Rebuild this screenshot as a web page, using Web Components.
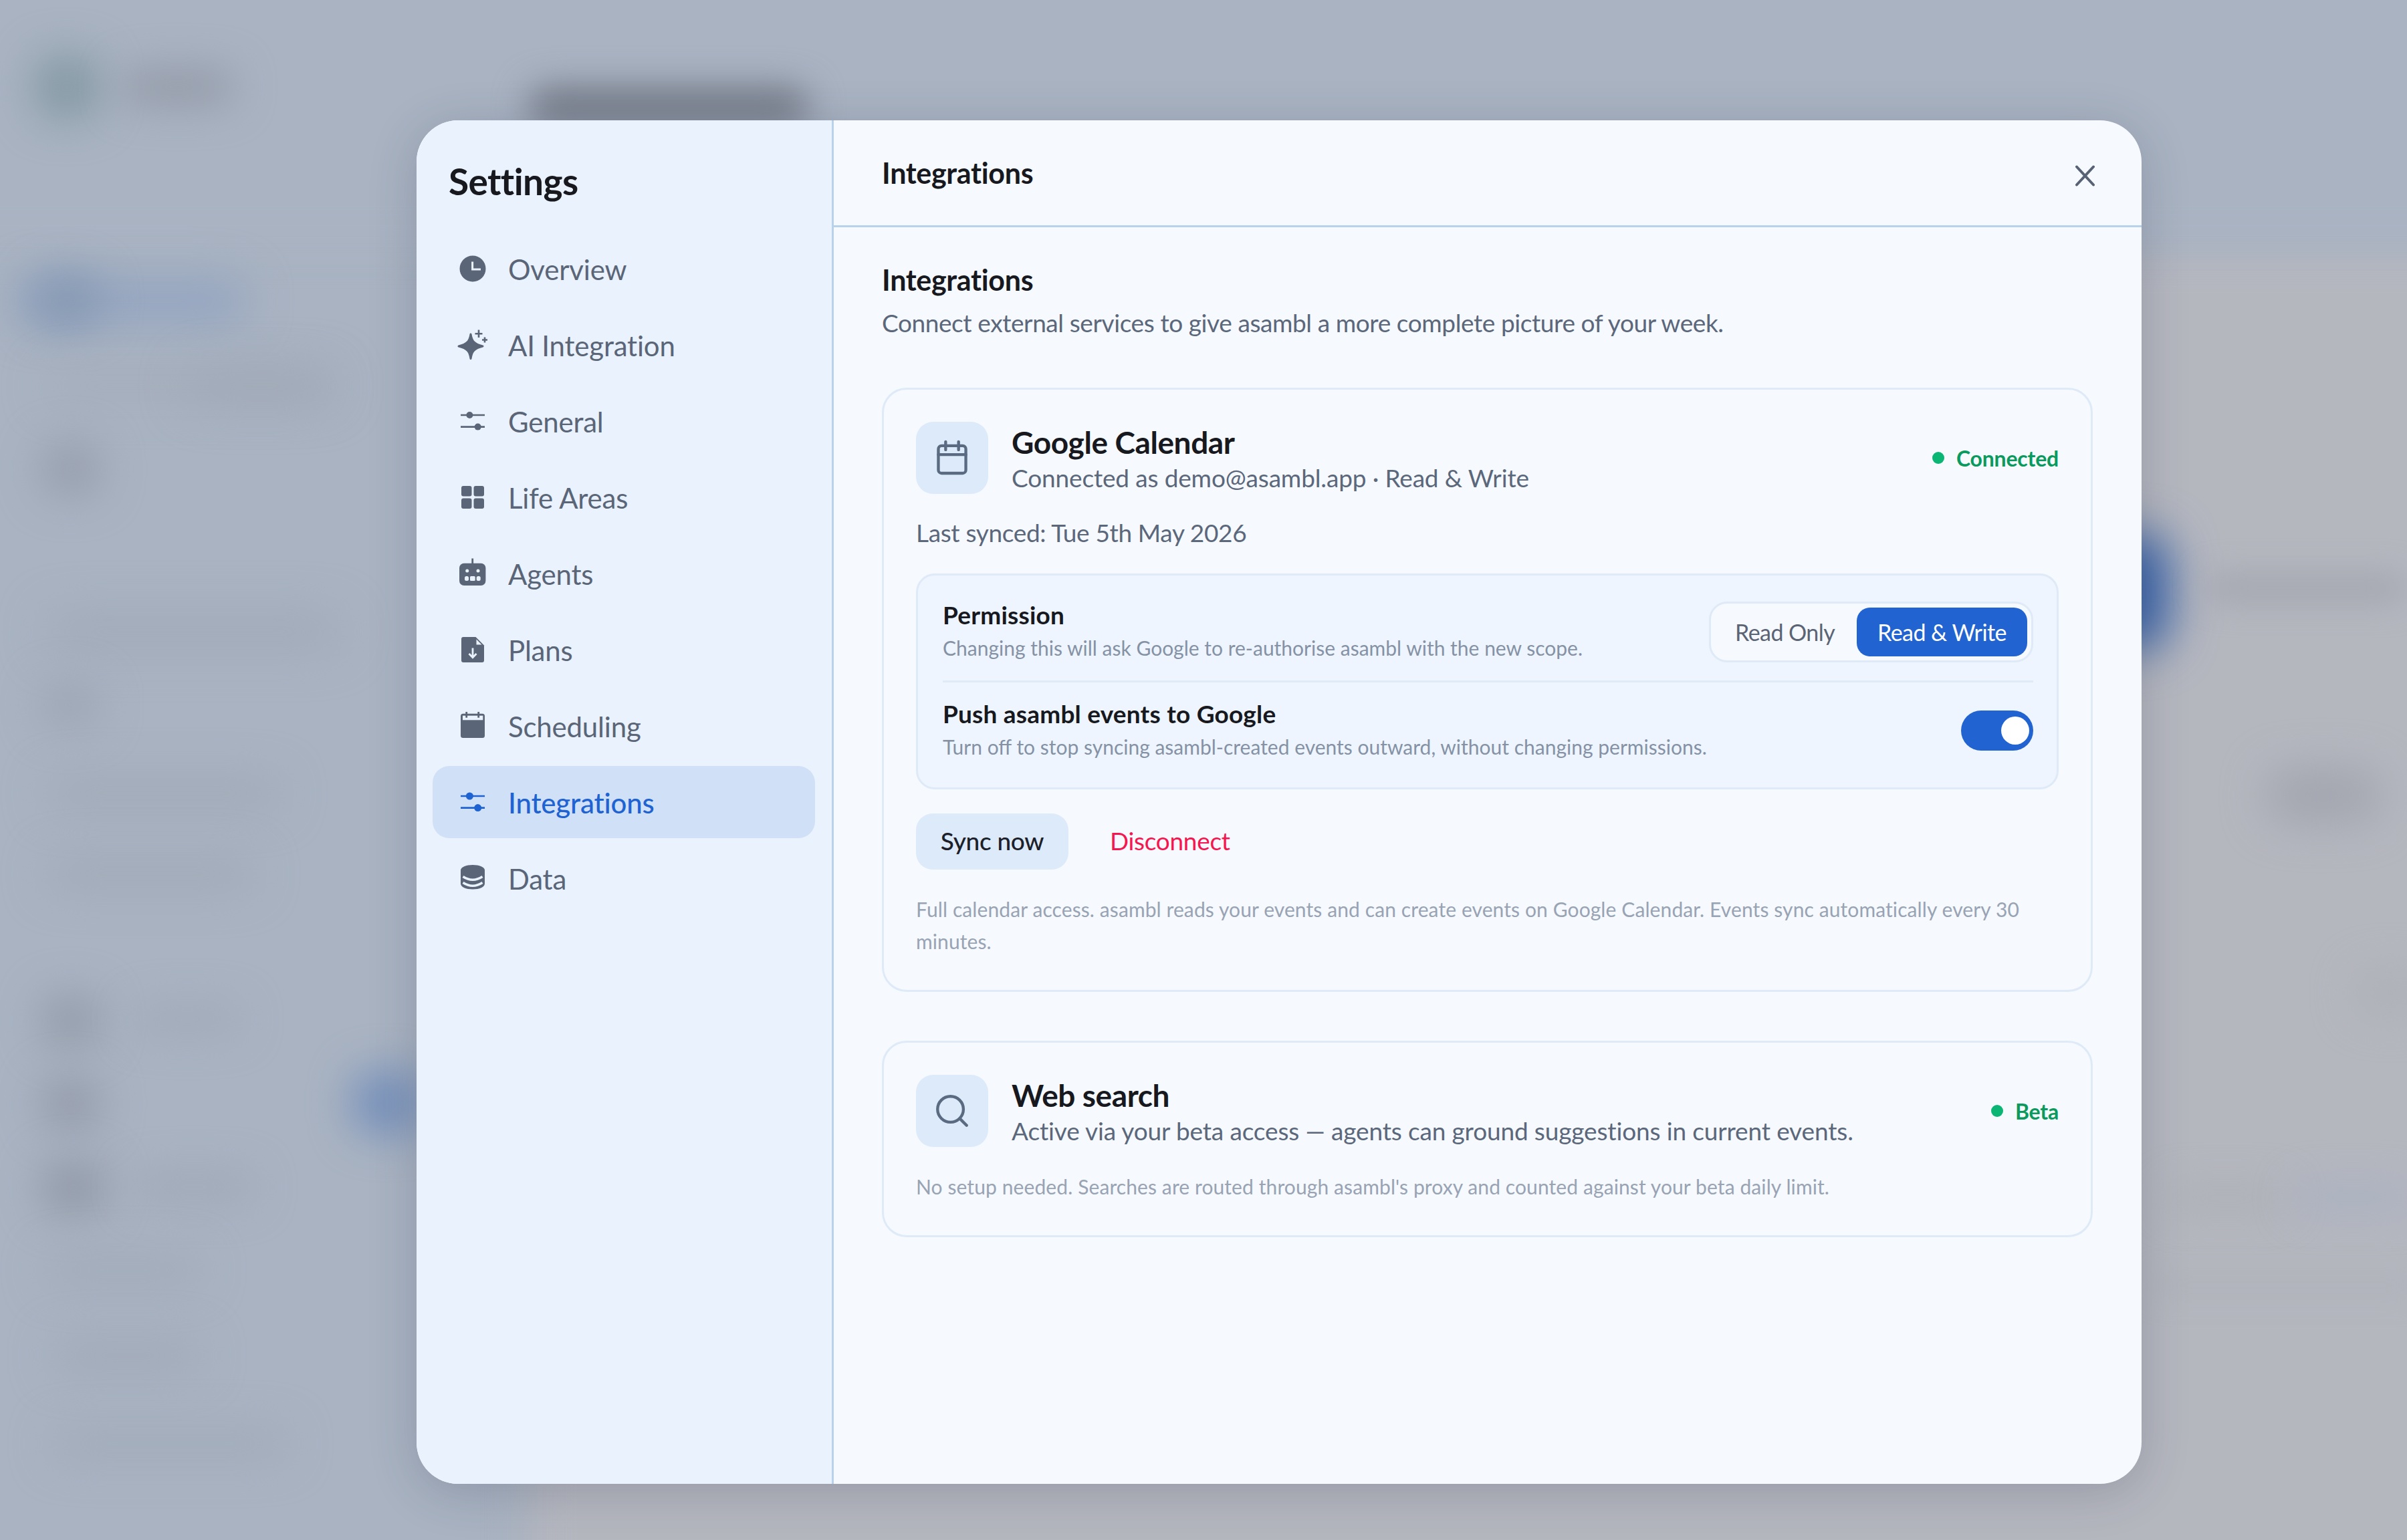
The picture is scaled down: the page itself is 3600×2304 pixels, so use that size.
<!doctype html>
<html>
<head>
<meta charset="utf-8">
<title>Settings</title>
<style>
html, body { margin: 0; padding: 0; }
body { width: 3600px; height: 2304px; overflow: hidden; background: #a9b3c2; font-family: "Lato", "Liberation Sans", sans-serif; }
integration-card button { font: inherit; font-size: 37px; letter-spacing: -.3px; border: 0; padding: 0 0 4px; background: none; font-family: "Lato", "Liberation Sans", sans-serif; }
integration-card .sync { box-sizing: border-box; width: 228px; height: 84px; border-radius: 25px; background: #dceafa; color: #1c2028; font-weight: 500; }
integration-card .disconnect { color: #f4174f; }
</style>
</head>
<body>
<blurred-page></blurred-page>
<modal-layer>
  <settings-modal>
    <settings-nav slot="nav">
      <nav-item label="Overview" icon="clock"></nav-item>
      <nav-item label="AI Integration" icon="spark"></nav-item>
      <nav-item label="General" icon="sliders"></nav-item>
      <nav-item label="Life Areas" icon="grid"></nav-item>
      <nav-item label="Agents" icon="robot"></nav-item>
      <nav-item label="Plans" icon="file"></nav-item>
      <nav-item label="Scheduling" icon="cal"></nav-item>
      <nav-item label="Integrations" icon="sliders" active></nav-item>
      <nav-item label="Data" icon="db"></nav-item>
    </settings-nav>

    <integration-card name="Google Calendar" sub="Connected as demo@asambl.app · Read &amp; Write" status="Connected" glyph="calendar">
      <p class="last">Last synced: Tue 5th May 2026</p>
      <div class="panel">
        <setting-row name="Permission" hint="Changing this will ask Google to re-authorise asambl with the new scope." first>
          <seg-control></seg-control>
        </setting-row>
        <setting-row name="Push asambl events to Google" hint="Turn off to stop syncing asambl-created events outward, without changing permissions.">
          <toggle-switch></toggle-switch>
        </setting-row>
      </div>
      <div class="actions">
        <button class="sync">Sync now</button>
        <button class="disconnect">Disconnect</button>
      </div>
      <p class="note">Full calendar access. asambl reads your events and can create events on Google Calendar. Events sync automatically every 30 minutes.</p>
    </integration-card>

    <integration-card name="Web search" sub="Active via your beta access — agents can ground suggestions in current events." status="Beta" glyph="search">
      <p class="note">No setup needed. Searches are routed through asambl's proxy and counted against your beta daily limit.</p>
    </integration-card>
  </settings-modal>
</modal-layer>

<script>
// blurred app behind the modal: x, y, w, h, colour, blur
const blobs = [
  [790, 367, 2900, 2100, '#b5b7bf', 30],
  [-100, -100, 3800, 470, '#a9b3c2', 26],
  [50, 80, 100, 100, '#879ba6', 30],
  [180, 105, 170, 50, '#9299a6', 30],
  [790, 130, 420, 60, '#747a87', 26],
  [20, 415, 350, 70, '#94a5c0', 32],
  [50, 410, 100, 80, '#8799b3', 30],
  [70, 560, 420, 36, '#a3acb9', 32],
  [280, 555, 220, 44, '#9fa8b6', 34],
  [60, 660, 92, 84, '#98a0ae', 30],
  [70, 920, 440, 50, '#a0a9b7', 34],
  [60, 1020, 90, 70, '#9da6b4', 30],
  [70, 1165, 350, 44, '#a0a9b6', 32],
  [70, 1285, 310, 44, '#a0a9b6', 32],
  [60, 1485, 92, 84, '#969eac', 30],
  [60, 1610, 92, 82, '#959dac', 30],
  [60, 1735, 100, 84, '#939ba9', 30],
  [200, 1505, 160, 40, '#a0a9b7', 30],
  [200, 1755, 180, 42, '#9fa8b6', 30],
  [70, 1880, 230, 40, '#a0a9b6', 32],
  [80, 2005, 220, 46, '#a0a9b7', 32],
  [80, 2140, 350, 40, '#a0a9b7', 32],
  [525, 1600, 110, 100, '#7a93bb', 30],
  [3075, 800, 170, 170, '#3a63a8', 34],
  [3300, 862, 300, 36, '#a1a4ae', 24],
  [3390, 1150, 170, 80, '#a2a5af', 32],
  [3520, 1450, 110, 70, '#aeb1b7', 30],
  [3240, 1775, 180, 36, '#adb0b6', 28],
  [3430, 1772, 180, 40, '#a9b1c2', 28],
  [3220, 1912, 400, 22, '#aeb1b9', 22]
];

class BlurredPage extends HTMLElement {
  constructor() {
    super();
    this.attachShadow({ mode: 'open' });
    const parts = blobs.map(b => `<i style="left:${b[0]}px;top:${b[1]}px;width:${b[2]}px;height:${b[3]}px;background:${b[4]};filter:blur(${b[5]}px)"></i>`);
    this.shadowRoot.innerHTML = `
      <style>
        :host { display: block; position: absolute; inset: 0; overflow: hidden; background: #a9b3c2; }
        i { position: absolute; display: block; border-radius: 36px; }
      </style>
      ${parts.join('')}`;
  }
}
customElements.define('blurred-page', BlurredPage);

class ModalLayer extends HTMLElement {
  constructor() {
    super();
    this.attachShadow({ mode: 'open' });
    this.shadowRoot.innerHTML = `
      <style>
        :host { display: flex; position: absolute; inset: 0; box-sizing: border-box; padding: 180px 397px 84px 623px; }
      </style>
      <slot></slot>`;
  }
}
customElements.define('modal-layer', ModalLayer);

const modalTpl = document.createElement('template');
modalTpl.innerHTML = `
<style>
:host {
  display: grid; grid-template-columns: 624px 1fr; width: 2580px; height: 2040px;
  border-radius: 62px; overflow: hidden; background: #f6f9fe;
  box-shadow: 0 12px 70px rgba(40, 50, 72, .22);
  color: #17191f; font-family: "Lato", "Liberation Sans", sans-serif;
}
.side { box-sizing: border-box; border-right: 3px solid #b9d2ec; background: #e9f2fd; }
.top {
  display: flex; align-items: center; justify-content: space-between; box-sizing: border-box;
  height: 160px; padding: 0 70px 0 72px; border-bottom: 3px solid #b9d2ec;
}
.top span { font-size: 43px; font-weight: 700; letter-spacing: -.3px; line-height: 56px; }
.top svg { display: block; width: 29px; height: 32px; margin-top: 9px; }
.body { padding: 51px 73px 0 72px; display: flex; flex-direction: column; }
h2 { margin: 0; font-size: 43px; font-weight: 700; letter-spacing: -.3px; line-height: 56px; }
.lead { margin: 12px 0 73px; font-size: 37px; line-height: 48px; color: #5b677a; letter-spacing: -.41px; }
.cards { display: flex; flex-direction: column; gap: 73px; }
</style>
<div class="side"><slot name="nav"></slot></div>
<div>
  <div class="top">
    <span>Integrations</span>
    <svg viewBox="0 0 29 32" fill="none" stroke="#576274" stroke-width="4" stroke-linecap="round"><path d="M2 2.5 27 29.5M27 2.5 2 29.5"/></svg>
  </div>
  <div class="body">
    <h2>Integrations</h2>
    <p class="lead">Connect external services to give asambl a more complete picture of your week.</p>
    <div class="cards"><slot></slot></div>
  </div>
</div>`;

class SettingsModal extends HTMLElement {
  constructor() {
    super();
    this.attachShadow({ mode: 'open' }).appendChild(modalTpl.content.cloneNode(true));
  }
}
customElements.define('settings-modal', SettingsModal);

class SettingsNav extends HTMLElement {
  constructor() {
    super();
    this.attachShadow({ mode: 'open' });
    this.shadowRoot.innerHTML = `
      <style>
        :host { display: block; padding: 58px 25px 0 24px; }
        h1 { margin: 0 0 44px 24px; font-size: 55px; font-weight: 700; line-height: 66px; letter-spacing: -.6px; color: #17191f; }
        nav { display: flex; flex-direction: column; gap: 6px; }
      </style>
      <h1>Settings</h1>
      <nav><slot></slot></nav>`;
  }
}
customElements.define('settings-nav', SettingsNav);

// nav icons are drawn on a 48 box, fill follows currentColor
const L = '#e9f2fd';
const navIcons = {
  clock: () => `<circle cx="24" cy="24" r="19.5" fill="currentColor"/><path d="M23.6 13.5V25H36" fill="none" stroke="${L}" stroke-width="3"/>`,
  spark: () => `<path d="M21 8C22.500 18 26 23 39 26 26 29 22.500 34 21 44.500 19.500 34 16 29 3 26 16 23 19.500 18 21 8Z" fill="currentColor" stroke="currentColor" stroke-width="3" stroke-linejoin="round"/><path d="M33 1.500V13M27.500 7.200H38.500M42 12.500V20.500M38 16.500H46" fill="none" stroke="currentColor" stroke-width="2.600"/>`,
  sliders: (active) => `<path d="M6 15H42M6 32.600H42" fill="none" stroke="currentColor" stroke-width="2.600"/><circle cx="19.400" cy="15" r="${active ? 5.500 : 5}" fill="currentColor"/><circle cx="31.700" cy="32.600" r="${active ? 5.500 : 5}" fill="currentColor"/>`,
  grid: () => `<rect x="7" y="7" width="15.500" height="15.500" rx="3" fill="currentColor"/><rect x="25.500" y="7" width="15.500" height="15.500" rx="3" fill="currentColor"/><rect x="7" y="25.500" width="15.500" height="15.500" rx="3" fill="currentColor"/><rect x="25.500" y="25.500" width="15.500" height="15.500" rx="3" fill="currentColor"/>`,
  robot: () => `<path d="M23.700 1.500V10" stroke="currentColor" stroke-width="2.800" fill="none"/><rect x="4" y="8.700" width="39.400" height="33.300" rx="7" fill="currentColor"/><circle cx="15.700" cy="20" r="2.500" fill="${L}"/><circle cx="32" cy="20" r="2.500" fill="${L}"/><rect x="12" y="28" width="6" height="7" rx="2.500" fill="${L}"/><rect x="20" y="28" width="7.700" height="7" rx="1.500" fill="${L}"/><rect x="29.700" y="28" width="6" height="7" rx="2.500" fill="${L}"/>`,
  file: () => `<path d="M10 5H28.500L41 17.500V40A3 3 0 0 1 38 43H10A3 3 0 0 1 7 40V8A3 3 0 0 1 10 5Z" fill="currentColor"/><path d="M29.500 8.500 37.500 16.500H29.500Z" fill="${L}"/><path d="M24 21.500V35.500M18.500 30 24 35.800 29.500 30" fill="none" stroke="${L}" stroke-width="2.800"/>`,
  cal: () => `<rect x="6" y="5.700" width="36" height="36.300" rx="3.500" fill="currentColor"/><rect x="9" y="8.700" width="30.300" height="6.600" fill="${L}"/><path d="M14.700 3V11.700M32.700 3V11.700" stroke="currentColor" stroke-width="2.800" fill="none"/>`,
  db: () => `<path d="M6 12C6 7.500 14 4 24 4S42 7.500 42 12V32C42 37 34 40.500 24 40.500S6 37 6 32Z" fill="currentColor"/><path d="M9.500 21.500Q24 31 38.500 21.500M9.500 30.500Q24 40 38.500 30.500" fill="none" stroke="${L}" stroke-width="3.600"/>`
};

class NavItem extends HTMLElement {
  constructor() {
    super();
    this.attachShadow({ mode: 'open' });
  }
  connectedCallback() {
    const active = this.hasAttribute('active');
    this.shadowRoot.innerHTML = `
      <style>
        :host {
          display: flex; align-items: center; height: 108px; box-sizing: border-box; padding-left: 36px; gap: 29px;
          border-radius: 25px; color: #5a6577; font-size: 42px; letter-spacing: -.2px;
        }
        :host([active]) { background: #d0e1f7; color: #1f63d2; font-weight: 500; }
        svg { display: block; width: 48px; height: 48px; flex: none; }
        span { padding-top: 2px; }
      </style>
      <svg viewBox="0 0 48 48">${navIcons[this.getAttribute('icon')](active)}</svg>
      <span>${this.getAttribute('label')}</span>`;
  }
}
customElements.define('nav-item', NavItem);

const cardGlyphs = {
  calendar: `<rect x="3.500" y="4.500" width="17" height="17" rx="2"/><path d="M16 2v5M8 2v5M3.500 10h17"/>`,
  search: `<circle cx="11" cy="11" r="8"/><path d="m21 21-4.300-4.300"/>`
};

const cardTpl = document.createElement('template');
cardTpl.innerHTML = `
<style>
:host {
  display: block; box-sizing: border-box; padding: 48px 48px 47px; border: 3px solid #deeaf7; border-radius: 37px;
}
.head { display: flex; align-items: center; }
.tile { display: flex; align-items: center; justify-content: center; width: 108px; height: 108px; flex: none; border-radius: 26px; background: #dceafa; }
.tile svg { display: block; width: 58px; height: 58px; fill: none; stroke: #5a6a80; stroke-width: 1.800; stroke-linecap: round; stroke-linejoin: round; }
.text { flex: 1; margin-left: 35px; padding-top: 2px; }
.name { font-size: 46px; font-weight: 700; line-height: 54px; letter-spacing: -.4px; color: #17191f; }
.sub { margin-top: 3px; font-size: 37px; line-height: 46px; letter-spacing: -.15px; color: #5b677a; }
.status { display: flex; align-items: center; gap: 18px; font-size: 32px; font-weight: 700; letter-spacing: -.2px; color: #0a9a5e; }
.dot { width: 18px; height: 18px; border-radius: 50%; background: #0bb573; }
::slotted(.last) { margin: 35px 0 2px; font-size: 37px; line-height: 46px; letter-spacing: -.35px; color: #5b677a; }
::slotted(.panel) {
  margin-top: 38px; border: 3px solid #deeaf7; border-radius: 28px; background: #eef5fe; padding: 0 35px 0 37px;
}
::slotted(.actions) { display: flex; align-items: center; gap: 62px; margin-top: 36px; }
::slotted(.note) { margin: 35px 0 2px; font-size: 30px; line-height: 48px; letter-spacing: .1px; color: #98a3b3; }
</style>
<div class="head">
  <div class="tile"><svg viewBox="0 0 24 24"></svg></div>
  <div class="text"><div class="name"></div><div class="sub"></div></div>
  <div class="status"><span class="dot"></span><span class="label"></span></div>
</div>
<slot></slot>`;

class IntegrationCard extends HTMLElement {
  constructor() {
    super();
    this.attachShadow({ mode: 'open' }).appendChild(cardTpl.content.cloneNode(true));
  }
  connectedCallback() {
    const root = this.shadowRoot;
    root.querySelector('.name').textContent = this.getAttribute('name');
    root.querySelector('.sub').textContent = this.getAttribute('sub');
    root.querySelector('.label').textContent = this.getAttribute('status');
    root.querySelector('svg').innerHTML = cardGlyphs[this.getAttribute('glyph')];
  }
}
customElements.define('integration-card', IntegrationCard);

class SettingRow extends HTMLElement {
  constructor() {
    super();
    this.attachShadow({ mode: 'open' });
  }
  connectedCallback() {
    this.shadowRoot.innerHTML = `
      <style>
        :host { display: flex; align-items: center; justify-content: space-between; padding: 24px 0 37px; }
        :host([first]) { padding: 36px 0 25px; border-bottom: 3px solid #deeaf7; }
        .t { margin-bottom: 4px; }
        .n { font-size: 37px; font-weight: 700; line-height: 46px; letter-spacing: .2px; color: #17191f; }
        .h { margin-top: 6px; font-size: 30px; line-height: 40px; color: #8592a5; }
      </style>
      <div class="t">
        <div class="n">${this.getAttribute('name')}</div>
        <div class="h">${this.getAttribute('hint')}</div>
      </div>
      <slot></slot>`;
  }
}
customElements.define('setting-row', SettingRow);

class SegControl extends HTMLElement {
  constructor() {
    super();
    this.attachShadow({ mode: 'open' });
    this.shadowRoot.innerHTML = `
      <style>
        :host {
          display: flex; box-sizing: border-box; width: 485px; height: 91px; padding: 6px; border: 3px solid #deeaf7;
          border-radius: 27px; background: #f6f9fe; font-size: 34px; letter-spacing: -.55px;
        }
        span { display: flex; align-items: center; flex: 1; padding: 0 0 0 30px; color: #5b6475; }
        .on { flex: none; width: 255px; justify-content: center; padding: 0; border-radius: 20px; background: #2163d1; color: #fff; }
      </style>
      <span>Read Only</span>
      <span class="on">Read &amp; Write</span>`;
  }
}
customElements.define('seg-control', SegControl);

class ToggleSwitch extends HTMLElement {
  constructor() {
    super();
    this.attachShadow({ mode: 'open' });
    this.shadowRoot.innerHTML = `
      <style>
        :host { display: flex; align-items: center; justify-content: flex-end; box-sizing: border-box; width: 108px; height: 60px; padding-right: 6px; border-radius: 30px; background: #2163d1; }
        i { display: block; width: 42px; height: 42px; border-radius: 50%; background: #fff; }
      </style>
      <i></i>`;
  }
}
customElements.define('toggle-switch', ToggleSwitch);
</script>
</body>
</html>
